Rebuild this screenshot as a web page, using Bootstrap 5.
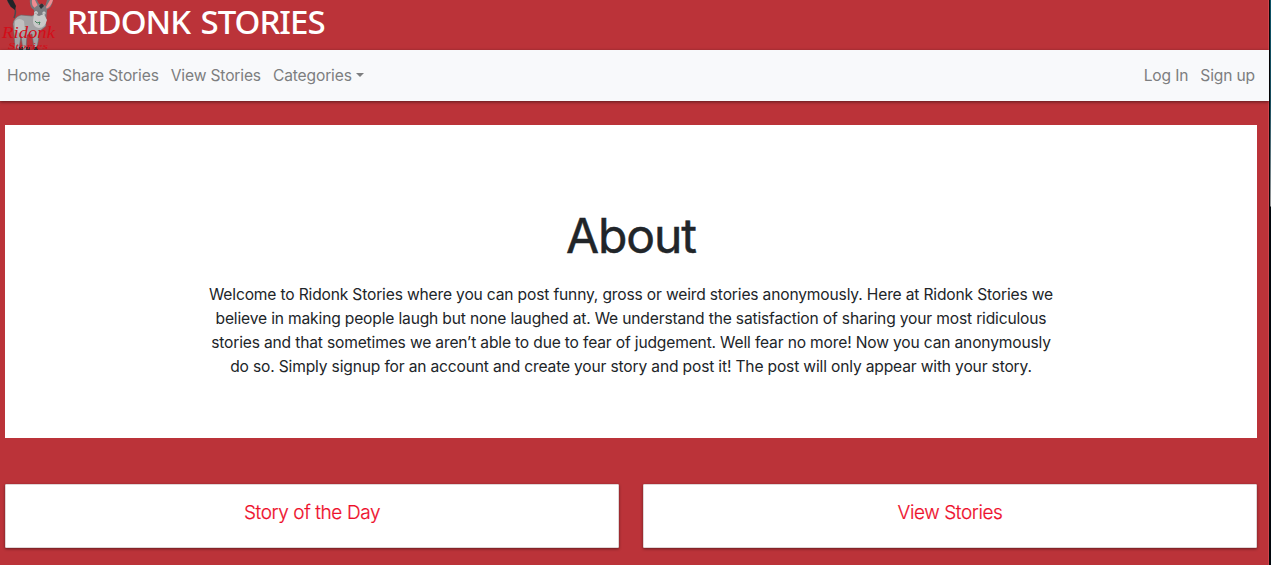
<!DOCTYPE html>
<html lang="en">
<head>
<meta charset="utf-8">
<meta name="viewport" content="width=device-width, initial-scale=1">
<title>Ridonk Stories</title>
<link href="https://cdn.jsdelivr.net/npm/bootstrap@5.3.0/dist/css/bootstrap.min.css" rel="stylesheet">
<style>
  body { font-family: Inter, "Liberation Sans", sans-serif; font-size: 16px; background: #bb3339; color: #212529; }
  .page { height: 565px; }
  .site { background: linear-gradient(#cf454c, #cf454c) right / 1px 100% no-repeat; }
  .edge { width: 2px; background: linear-gradient(90deg, #050709 1px, transparent 1px), linear-gradient(#0d5266 0, #174c5d 100px, #999 206px, #02070c 207px); }
  .masthead { height: 50px; }
  .logo { width: 60px; height: 50px; }
  .site-title { font: 500 33px/44px "Noto Sans", sans-serif; margin-left: 7px; color: #fff; letter-spacing: -1px; word-spacing: 3px; white-space: nowrap; }
  .main-nav { height: 51px; padding: 0 8px 0 1px; background: #f8f9fb; box-shadow: 0 1px 3px rgba(0,0,0,.5); }
  .main-nav .nav-link { padding: 0 6px; line-height: 24px; color: #7d7e80; font-size: 15.6px; letter-spacing: -.15px; white-space: nowrap; }
  .main-nav .dropdown-toggle::after { margin-left: 4px; vertical-align: 4px; border-top-width: 4.5px; border-left-width: 4.5px; border-right-width: 4.5px; }
  .content { padding: 24px 12px 0 5px; }
  .about { height: 313px; padding-top: 82px; }
  .about h1 { font-size: 48px; line-height: 58px; font-weight: 400; letter-spacing: -1.1px; -webkit-text-stroke: .5px #212529; margin-bottom: 18px; }
  .about p { line-height: 24px; font-size: 15.6px; letter-spacing: -.165px; white-space: nowrap; }
  .tiles { margin-top: 46px; gap: 24px; }
  .tile { height: 64px; border: 1px solid #dfd6d7; border-radius: 1px; padding-top: 16px; box-shadow: 0 1px 3px rgba(0,0,0,.45); }
  .tile a { color: #ee0f2b; font-size: 19px; line-height: 24px; font-weight: 300; letter-spacing: -.4px; -webkit-text-stroke: .2px #ee0f2b; }
</style>
</head>
<body class="overflow-hidden">
<div class="page d-flex">
  <div class="site flex-grow-1 overflow-hidden">
    <header class="masthead d-flex">
      <svg class="logo" viewBox="0 0 60 50" aria-label="Ridonk Stories">
        <path d="M14 18C17 10 15 7 11 6L8 1" fill="none" stroke="#494a4e" stroke-width="1.5"/>
        <path d="M7 0h6l3 6-1 4-4-3z" fill="#222327"/>
        <path d="M13 24q1-7 8-9l11 1 4-2 9 2 1 10-6 5-3 17h-3l-2-14-5 1-1 15h-3l-2-14-2 13h-4l-1-16z" fill="#a3a3a5" stroke="#66666a" stroke-width=".6"/>
        <path d="M15 21q4-4 9 0l1 9-6 3-4-4z" fill="#c0c0c0"/>
        <path d="M34 10Q29 7 30-1l7 1 3 6zM45 7l2-7h6q-1 8-7 10z" fill="#77777b"/>
        <path d="M35 8Q31 5 32 0l3 0 3 6zM46 7l4-7h3q-2 7-7 9z" fill="#ef8b90"/>
        <path d="M34 9q3-5 8-5 4 1 5 6l-1 12q-3 6-7 5l-5-6z" fill="#7b7c80"/>
        <path d="M39 6q3-5 5 0l-3 3z" fill="#303136"/>
        <path d="M34 14l5 2 5-2 3 6q-2 8-8 8-6-1-6-7z" fill="#c9c9c9"/>
        <circle cx="36" cy="13" r="1.7" fill="#eee"/><circle cx="44" cy="13" r="1.5" fill="#eee"/>
        <circle cx="36" cy="13" r=".6"/><circle cx="44" cy="13" r=".5"/>
        <path d="M35 21l2 2 3-1-1 3" fill="none" stroke="#297346" stroke-width=".8"/>
        <path d="M19 47h4v3h-4zM26 47h4v3h-4zM34 47h4v3h-4z" fill="#303136"/>
        <g fill="#d40c18" font-family="'Liberation Serif', serif" font-style="italic">
          <text x="2" y="37.5" font-size="17" textLength="53" lengthAdjust="spacingAndGlyphs">Ridonk</text>
          <text x="8" y="48.5" font-size="9" textLength="40" lengthAdjust="spacingAndGlyphs">Stories</text>
        </g>
      </svg>
      <div class="site-title">RIDONK STORIES</div>
    </header>
    <nav class="main-nav position-relative d-flex align-items-center justify-content-between">
      <div class="nav flex-nowrap">
        <a class="nav-link" href="#">Home</a>
        <a class="nav-link" href="#">Share Stories</a>
        <a class="nav-link" href="#">View Stories</a>
        <a class="nav-link dropdown-toggle" href="#">Categories</a>
      </div>
      <div class="nav flex-nowrap">
        <a class="nav-link" href="#">Log In</a>
        <a class="nav-link" href="#">Sign up</a>
      </div>
    </nav>
    <main class="content">
      <section class="about bg-white text-center">
        <h1>About</h1>
        <p class="mb-0">Welcome to Ridonk Stories where you can post funny, gross or weird stories anonymously. Here at Ridonk Stories we<br>believe in making people laugh but none laughed at. We understand the satisfaction of sharing your most ridiculous<br>stories and that sometimes we aren’t able to due to fear of judgement. Well fear no more! Now you can anonymously<br>do so. Simply signup for an account and create your story and post it! The post will only appear with your story.</p>
      </section>
      <section class="tiles d-flex">
        <div class="tile flex-fill w-50 bg-white text-center"><a class="text-decoration-none" href="#">Story of the Day</a></div>
        <div class="tile flex-fill w-50 bg-white text-center"><a class="text-decoration-none" href="#">View Stories</a></div>
      </section>
    </main>
  </div>
  <div class="edge flex-shrink-0"></div>
</div>
<script src="https://cdn.jsdelivr.net/npm/bootstrap@5.3.0/dist/js/bootstrap.bundle.min.js"></script>
</body>
</html>
